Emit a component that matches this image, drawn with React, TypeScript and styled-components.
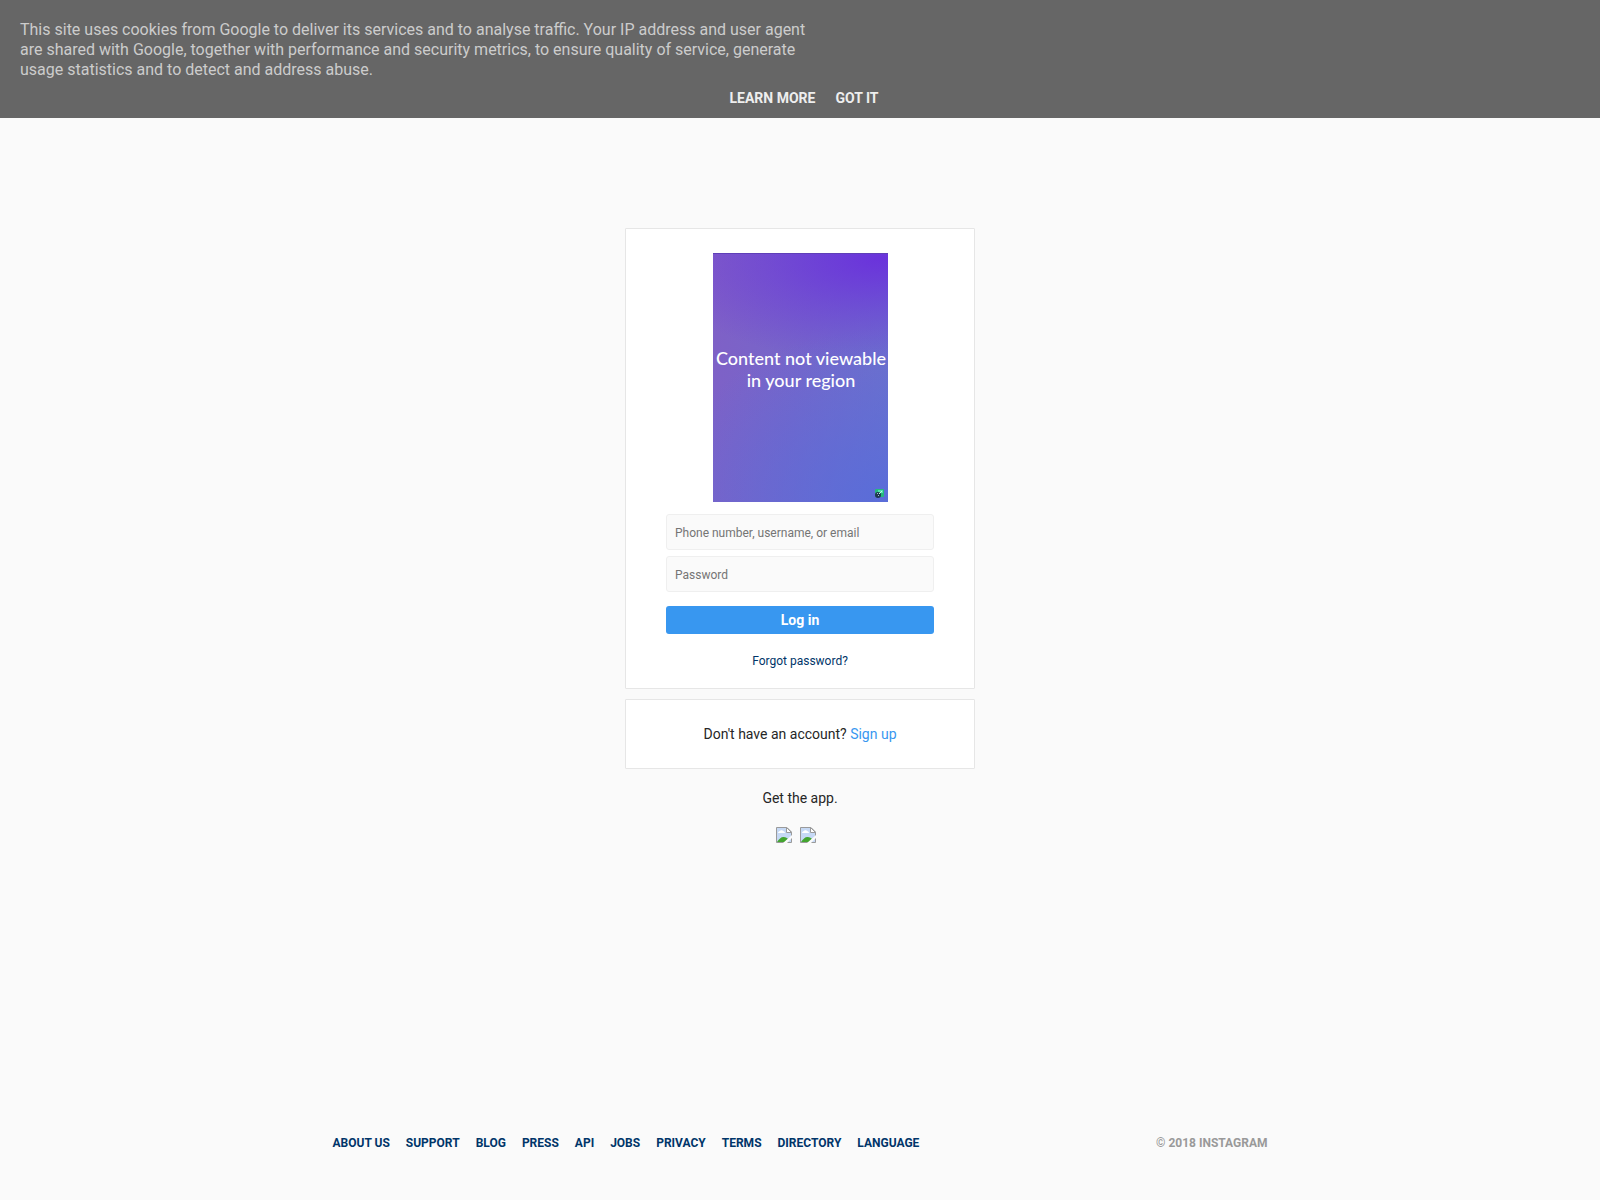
import React from 'react';
import styled, { createGlobalStyle } from 'styled-components';

const GlobalStyle = createGlobalStyle`
  * { box-sizing: border-box; }
  body {
    margin: 0;
    background: #fafafa;
    color: #262626;
    font-family: Roboto, "Liberation Sans", sans-serif;
    font-size: 14px;
    line-height: 18px;
  }
  a { text-decoration: none; }
`;

const Page = styled.div`
  display: flex;
  flex-direction: column;
  min-height: 100vh;
`;

const CookieBar = styled.aside`
  background: #666;
  padding: 20px 20px 11px;
`;

const CookieText = styled.p`
  margin: 0;
  max-width: 800px;
  color: #ccc;
  font-size: 16px;
  line-height: 20px;
`;

const CookieActions = styled.div`
  display: flex;
  justify-content: center;
  gap: 20px;
  padding: 9px 0 0 8px;
`;

const CookieLink = styled.a`
  color: #eee;
  font-weight: 700;
  text-transform: uppercase;
`;

const Main = styled.main`
  flex: 1;
  display: flex;
  flex-direction: column;
  align-items: center;
  padding: 110px 20px 0;
`;

const Column = styled.div`
  display: flex;
  flex-direction: column;
  gap: 10px;
  width: 100%;
  max-width: 350px;
`;

const Card = styled.section`
  display: flex;
  flex-direction: column;
  align-items: center;
  background: #fff;
  border: 1px solid #e6e6e6;
  border-radius: 1px;
  padding: 24px 40px 18px;
`;

const SignUpCard = styled(Card)`
  padding: 25px 40px;
`;

const SignUpText = styled.p`
  margin: 0;
`;

const SignUpLink = styled.a`
  color: #3897f0;
`;

const Notice = styled.div`
  display: flex;
  flex-direction: column;
  width: 175px;
  height: 249px;
  border-top: 1px solid #5f3fb8;
  background:
    radial-gradient(ellipse 130% 42% at 95% 2%, rgba(106, 48, 220, 0.95), rgba(106, 48, 220, 0.45) 50%, rgba(106, 48, 220, 0)),
    radial-gradient(ellipse 130% 70% at 100% 100%, rgba(88, 108, 218, 0.9), rgba(88, 108, 218, 0)),
    linear-gradient(100deg, #8060c6 0%, #7566ca 50%, #6b73cd 100%);
`;

const NoticeText = styled.p`
  margin: auto 0;
  padding: 0 0 14px 2px;
  color: #fff;
  font-family: Lato, sans-serif;
  font-size: 18px;
  font-weight: 500;
  line-height: 22px;
  text-align: center;
  white-space: nowrap;
`;

const NoticeHead = styled.div`
  height: 9px;
`;

const NoticeFoot = styled.div`
  display: flex;
  justify-content: flex-end;
  padding: 0 4px 4px;
  line-height: 0;
`;

const Form = styled.form`
  display: flex;
  flex-direction: column;
  gap: 6px;
  width: 100%;
  margin-top: 12px;
`;

const Field = styled.input`
  width: 100%;
  height: 36px;
  padding: 2px 8px 0;
  background: #fafafa;
  border: 1px solid #efefef;
  border-radius: 3px;
  color: #262626;
  font: 12px Roboto, "Liberation Sans", sans-serif;
  &::placeholder { color: #757575; }
`;

const Submit = styled.button`
  height: 28px;
  margin-top: 8px;
  padding: 0 8px;
  background: #3897f0;
  border: 0;
  border-radius: 3px;
  color: #fff;
  font: 700 14px Roboto, "Liberation Sans", sans-serif;
`;

const Forgot = styled.a`
  margin-top: 18px;
  color: #003569;
  font-size: 12px;
`;

const AppLabel = styled.p`
  margin: 10px 0 0;
  text-align: center;
`;

const Stores = styled.div`
  display: flex;
  justify-content: center;
  padding-top: 10px;
`;

const StoreLink = styled.a`
  display: flex;
  margin-right: 8px;
`;

const Footer = styled.footer`
  display: flex;
  flex-wrap: wrap;
  justify-content: space-between;
  gap: 16px;
  width: 100%;
  max-width: 935px;
  margin: 0 auto;
  padding: 38px 0 48px;
  font-size: 12px;
  font-weight: 700;
  text-transform: uppercase;
`;

const FooterNav = styled.nav`
  display: flex;
  flex-wrap: wrap;
  gap: 0 16px;
`;

const FooterLink = styled.a`
  color: #003569;
`;

const Copyright = styled.span`
  color: #999;
`;

const MissingImage = () => (
  <svg width="16" height="16" viewBox="0 0 16 16" aria-hidden="true">
    <path d="M0.5 0.5H11L15.5 5V15.5H0.5Z" fill="#c6d9f5" />
    <path d="M2 6c0-1 1-2 2-2C4 3 7 3 7 4c1 0 2 1 2 2Z" fill="#fff" />
    <path d="M1 15C3 12 5 10 7.5 10S11 11 12 12l-3 3Z" fill="#43a52f" />
    <path d="M0.5 15.5V0.5H11L15.5 5V15.5Z" fill="none" stroke="#9a9a9a" />
    <path d="M10.5 0.5V5.5H15.5Z" fill="#fff" stroke="#9a9a9a" />
    <path d="M7 16L16 8V11L11 16Z" fill="#fafafa" />
  </svg>
);

const NoticeBadge = () => (
  <svg width="9" height="9" viewBox="0 0 9 9" aria-hidden="true">
    <rect width="9" height="8" rx="1" fill="#25b97d" />
    <rect x="3" y="1" width="5" height="3" fill="#4fe0ad" />
    <circle cx="3" cy="6" r="3" fill="#20364f" />
    <path d="M2 4h1v1H2zM4 4h1v1H4zM3 6h1v1H3z" fill="#9ec6cf" />
    <path d="M4 5l3-3" stroke="#c7f6e5" />
  </svg>
);

const footerLinks = [
  'About us', 'Support', 'Blog', 'Press', 'API',
  'Jobs', 'Privacy', 'Terms', 'Directory', 'Language',
];

export default function App() {
  return (
    <Page>
      <GlobalStyle />
      <CookieBar>
        <CookieText>
          This site uses cookies from Google to deliver its services and to analyse traffic. Your IP
          address and user agent are shared with Google, together with performance and security
          metrics, to ensure quality of service, generate usage statistics and to detect and address
          abuse.
        </CookieText>
        <CookieActions>
          <CookieLink href="#learn">Learn more</CookieLink>
          <CookieLink href="#accept">Got it</CookieLink>
        </CookieActions>
      </CookieBar>
      <Main>
        <Column>
          <Card>
            <Notice>
              <NoticeHead />
              <NoticeText>
                Content not viewable
                <br />
                in your region
              </NoticeText>
              <NoticeFoot>
                <NoticeBadge />
              </NoticeFoot>
            </Notice>
            <Form onSubmit={(e) => e.preventDefault()}>
              <Field
                type="text"
                aria-label="Phone number, username, or email"
                placeholder="Phone number, username, or email"
              />
              <Field type="password" aria-label="Password" placeholder="Password" />
              <Submit type="submit">Log in</Submit>
            </Form>
            <Forgot href="#forgot">Forgot password?</Forgot>
          </Card>
          <SignUpCard>
            <SignUpText>
              Don't have an account? <SignUpLink href="#signup">Sign up</SignUpLink>
            </SignUpText>
          </SignUpCard>
          <AppLabel>Get the app.</AppLabel>
          <Stores>
            <StoreLink href="#ios" aria-label="Download for iOS"><MissingImage /></StoreLink>
            <StoreLink href="#android" aria-label="Download for Android"><MissingImage /></StoreLink>
          </Stores>
        </Column>
      </Main>
      <Footer>
        <FooterNav>
          {footerLinks.map((label) => (
            <FooterLink key={label} href="#footer">{label}</FooterLink>
          ))}
        </FooterNav>
        <Copyright>© 2018 Instagram</Copyright>
      </Footer>
    </Page>
  );
}
